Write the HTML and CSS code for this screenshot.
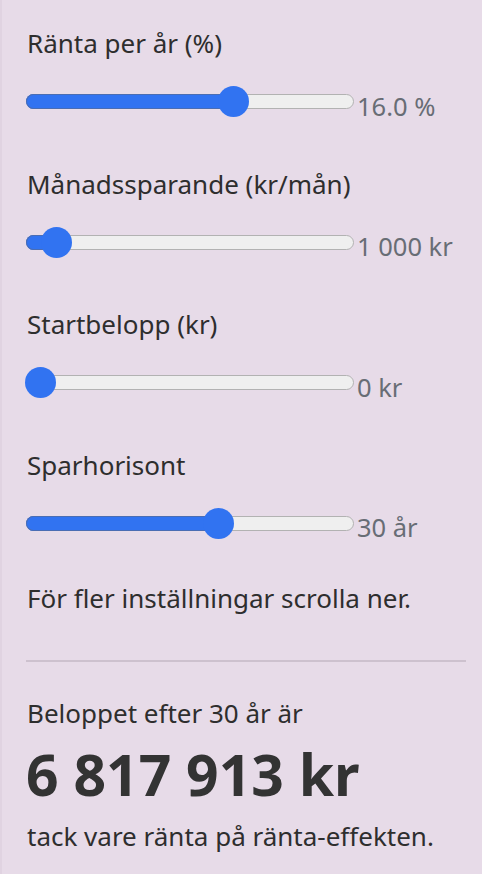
FILE: index.html
```html
<!DOCTYPE html>
<html lang="sv">
<head>
<meta charset="utf-8">
<title>Ränta på ränta</title>
<link rel="stylesheet" href="styles.css">
</head>
<body>
<main class="panel">
  <section class="field">
    <div class="label">Ränta per år (%)</div>
    <div class="slider-row">
      <div class="track" style="--pos:192px"><div class="fill"></div><div class="thumb"></div></div>
      <span class="value">16.0 %</span>
    </div>
  </section>
  <section class="field">
    <div class="label">Månadssparande (kr/mån)</div>
    <div class="slider-row">
      <div class="track" style="--pos:15px"><div class="fill"></div><div class="thumb"></div></div>
      <span class="value">1 000 kr</span>
    </div>
  </section>
  <section class="field">
    <div class="label">Startbelopp (kr)</div>
    <div class="slider-row">
      <div class="track" style="--pos:-1px"><div class="fill"></div><div class="thumb"></div></div>
      <span class="value">0 kr</span>
    </div>
  </section>
  <section class="field">
    <div class="label">Sparhorisont</div>
    <div class="slider-row">
      <div class="track" style="--pos:177px"><div class="fill"></div><div class="thumb"></div></div>
      <span class="value">30 år</span>
    </div>
  </section>
  <p class="hint">För fler inställningar scrolla ner.</p>
  <hr class="divider">
  <p class="result-label">Beloppet efter 30 år är</p>
  <p class="amount">6 817 913 kr</p>
  <p class="result-note">tack vare ränta på ränta-effekten.</p>
</main>
</body>
</html>
```

FILE: styles.css
```css
html, body {
  margin: 0;
  padding: 0;
  background: #e7dbe8;
}

body {
  font-family: "Noto Sans", "Open Sans", sans-serif;
  color: #2e2e2e;
}

.panel {
  box-sizing: border-box;
  width: 482px;
  min-height: 874px;
  padding: 28px 16px 0 24px;
  border-left: 2px solid #e0d3e1;
  margin: 0;
  display: flex;
  flex-direction: column;
}

.field {
  display: flex;
  flex-direction: column;
}

.field + .field {
  margin-top: 51px;
}

.label {
  font-size: 26px;
  line-height: 30px;
  height: 30px;
  padding-left: 1px;
}

.slider-row {
  margin-top: 27.5px;
  height: 32px;
  display: flex;
  align-items: center;
}

.track {
  position: relative;
  box-sizing: border-box;
  width: 328px;
  height: 15px;
  background: #efefef;
  border: 1px solid #b2b2b2;
  border-radius: 8px;
  flex: none;
}

.fill {
  position: absolute;
  left: -1px;
  top: -1px;
  height: 15px;
  width: calc(var(--pos) + 15px);
  background: #3173f1;
  border-radius: 8px;
  box-shadow: inset 0 0 0 1px #4a6db3;
}

.thumb {
  position: absolute;
  top: 50%;
  left: calc(var(--pos) - 1px);
  width: 31px;
  height: 31px;
  margin-top: -15.5px;
  border-radius: 50%;
  background: #3173f1;
}

.value {
  margin-left: 3px;
  font-size: 25.5px;
  line-height: 30px;
  color: #686d75;
  position: relative;
  top: 4px;
  white-space: nowrap;
}

.hint {
  margin: 44px 0 0 1px;
  font-size: 26px;
  line-height: 30px;
}

.divider {
  margin: 47px 0 0 0;
  border: 0;
  height: 2px;
  background: #cdc1ce;
}

.result-label {
  margin: 36px 0 0 1px;
  font-size: 26px;
  line-height: 30px;
}

.amount {
  margin: 11px 0 0 0;
  font-size: 57px;
  line-height: 70px;
  font-weight: 700;
  color: #333333;
}

.result-note {
  margin: 12px 0 0 1px;
  font-size: 26px;
  line-height: 30px;
}
```
